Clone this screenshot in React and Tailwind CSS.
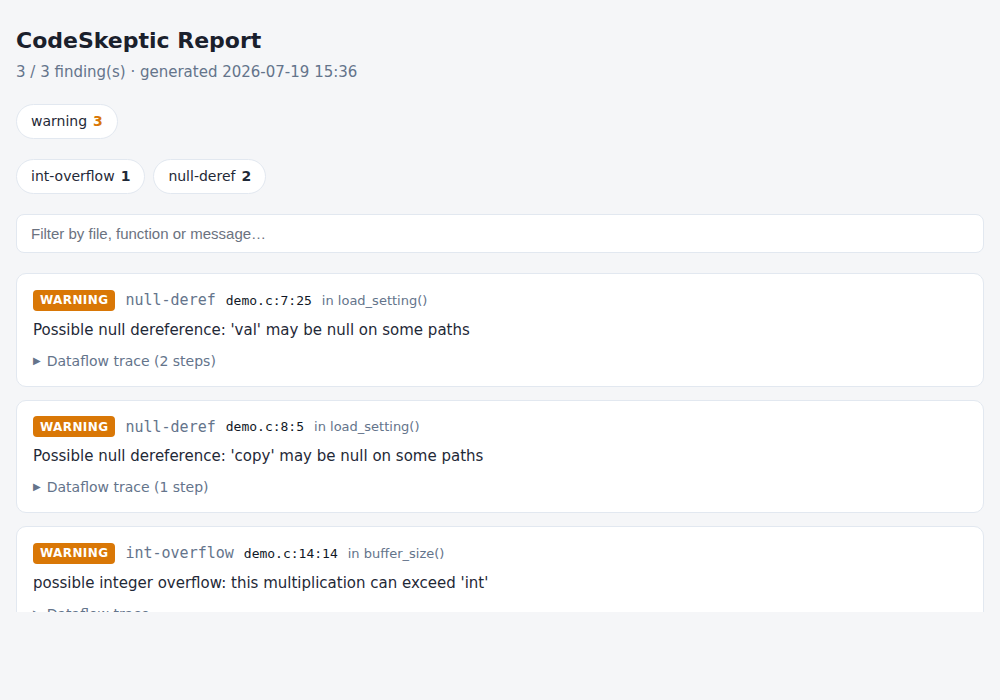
import React from 'react';

const findings = [
  { rule: 'null-deref', loc: 'demo.c:7:25', fn: 'load_setting()', msg: "Possible null dereference: 'val' may be null on some paths", trace: 'Dataflow trace (2 steps)' },
  { rule: 'null-deref', loc: 'demo.c:8:5', fn: 'load_setting()', msg: "Possible null dereference: 'copy' may be null on some paths", trace: 'Dataflow trace (1 step)' },
  { rule: 'int-overflow', loc: 'demo.c:14:14', fn: 'buffer_size()', msg: "possible integer overflow: this multiplication can exceed 'int'", trace: 'Dataflow trace' },
];

const Pill = ({ label, count, countClass }) => (
  <span className="inline-flex items-center h-[35px] px-[14px] rounded-full bg-white border border-[#e2e8f0] text-[14px] text-[#1f2937]">
    {label}
    <b className={`ml-[6px] font-bold ${countClass}`}>{count}</b>
  </span>
);

const FindingCard = ({ f }) => (
  <div className="bg-white border border-[#e2e8f0] rounded-[10px] px-4 pt-[15px] pb-[15px]">
    <div className="flex items-center gap-[10px]">
      <span className="inline-flex items-center h-[21px] px-[7px] rounded-[4px] bg-[#d97706] text-white text-[12px] font-bold tracking-[0.4px]">WARNING</span>
      <span className="text-[15px] text-[#64748b] font-['DejaVu_Sans_Mono',monospace]">{f.rule}</span>
      <span className="text-[13px] text-[#111827] font-['DejaVu_Sans_Mono',monospace]">{f.loc}</span>
      <span className="text-[13px] text-[#64748b]">in {f.fn}</span>
    </div>
    <p className="mt-[7px] text-[15px] leading-[22px] text-[#1f2937]">{f.msg}</p>
    <div className="mt-[10px] flex items-center text-[14px] leading-[20px] text-[#64748b]">
      <span className="text-[10px] mr-[6px]">▶</span>
      {f.trace}
    </div>
  </div>
);

export default function App() {
  return (
    <div className="min-h-screen bg-[#f5f6f8] font-['DejaVu_Sans',sans-serif]">
      <div className="h-[612px] overflow-hidden px-4 pt-[27px]">
        <h1 className="text-[22px] leading-[28px] font-bold text-[#1a202c]">CodeSkeptic Report</h1>
        <p className="mt-[6px] text-[15px] leading-[22px] text-[#64748b]">3 / 3 finding(s) · generated 2026-07-19 15:36</p>

        <div className="mt-[21px] flex gap-2">
          <Pill label="warning" count="3" countClass="text-[#d97706]" />
        </div>
        <div className="mt-[20px] flex gap-2">
          <Pill label="int-overflow" count="1" countClass="text-[#1f2937]" />
          <Pill label="null-deref" count="2" countClass="text-[#1f2937]" />
        </div>

        <input
          className="mt-[20px] block w-full h-[39px] px-[14px] rounded-[8px] bg-white border border-[#e2e8f0] text-[15px] font-['Liberation_Sans',Arial,sans-serif] placeholder:text-[#6b7280] outline-none"
          placeholder="Filter by file, function or message…"
        />

        <div className="mt-[20px] flex flex-col gap-[13px]">
          {findings.map((f, i) => (
            <FindingCard key={i} f={f} />
          ))}
        </div>
      </div>
    </div>
  );
}
